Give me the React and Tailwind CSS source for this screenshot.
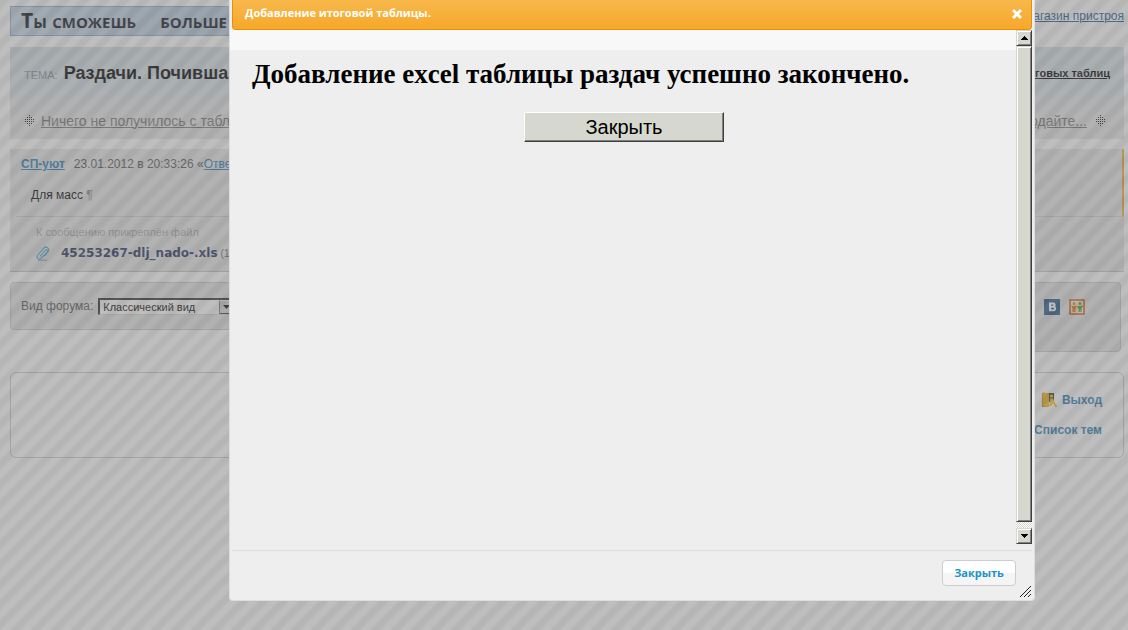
import React from 'react';

const stripes =
  'bg-[linear-gradient(135deg,#6b6b6b_20%,#7c7c7c_30%,#7c7c7c_45%,#6b6b6b_55%,#6b6b6b_70%,#7c7c7c_80%,#7c7c7c_95%,#6b6b6b)] bg-[length:20px_20px]';

function DotArrow({ flip }) {
  return (
    <svg width="11" height="11" viewBox="0 0 11 11" className={flip ? 'shrink-0 rotate-180' : 'shrink-0'} fill="#0b0b18">
      {[
        [5, 0], [3, 2], [5, 2], [7, 2], [1, 4], [3, 4], [5, 4], [7, 4], [9, 4],
        [1, 6], [3, 6], [5, 6], [7, 6], [9, 6], [3, 8], [5, 8], [7, 8], [5, 10],
      ].map(([x, y]) => (
        <rect key={`${x}-${y}`} x={x} y={y} width="1" height="1" />
      ))}
    </svg>
  );
}

function ClipIcon() {
  return (
    <svg width="14" height="15" viewBox="0 0 14 15" className="shrink-0" fill="none" stroke="#4fa3c4" strokeWidth="1.3" strokeLinecap="round">
      <path d="M4.2 10.2 9.4 4.2a1.2 1.2 0 0 1 1.9 1.5L5.4 12.2a2.4 2.4 0 0 1-3.7-3.1L7.8 2a2.8 2.8 0 0 1 4.4 3.4L8.8 9.6" />
      <path d="M2 14.2h9" stroke="#8aa4ae" strokeWidth="1" />
    </svg>
  );
}

function VkIcon() {
  return (
    <svg width="16" height="16" viewBox="0 0 16 16">
      <rect width="16" height="16" fill="#24578f" />
      <path d="M6 4.5h3a1.5 1.5 0 0 1 0 3.2H6zM6 7.7h3.4a1.7 1.7 0 0 1 0 3.6H6z" fill="none" stroke="#fff" strokeWidth="2" />
    </svg>
  );
}

function PeopleIcon() {
  return (
    <svg width="16" height="16" viewBox="0 0 16 16">
      <rect x="1" y="1" width="14" height="14" fill="#fbeecb" stroke="#d4581c" strokeWidth="1.6" />
      <g fill="#e0751a">
        <circle cx="5" cy="4.7" r="1.4" />
        <path d="M2.5 6.3 4 7h2.2l1.4-.7v1.8l-1 .7V13H5.3v-2.5h-.4V13H3.5V8.8l-1-.7z" />
      </g>
      <g fill="#4ca32a">
        <circle cx="11" cy="4.7" r="1.4" />
        <path d="M8.2 7.4 9.6 7H12l1.7-.8V8l-1.1.9V13h-1.3v-2.5h-.5V13H9.5V8.8l-1.3.2z" />
      </g>
    </svg>
  );
}

function ExitIcon() {
  return (
    <svg width="16" height="16" viewBox="0 0 16 16">
      <path d="M0 1h7v14H0z" fill="#c98a10" />
      <path d="M1 0 7 2v13l-6-1z" fill="#f2bb1c" />
      <path d="M7 1h5v9H7z" fill="#4e4220" />
      <circle cx="9.5" cy="4" r="1.5" fill="#f4d36a" />
      <path d="m8.500 6 2.500 1 1.500 3 3 5h-2l-3-4-1 3H7l1-4z" fill="#f2c52e" />
    </svg>
  );
}

function ScrollButton({ label, down }) {
  return (
    <button
      type="button"
      aria-label={label}
      className="flex h-4 w-4 items-center justify-center border border-t-[#d6d8cf] border-l-[#d6d8cf] border-r-[#404040] border-b-[#404040] bg-[#d6d8cf] shadow-[inset_1px_1px_#ffffff,inset_-1px_-1px_#808080]"
    >
      <svg width="7" height="4" viewBox="0 0 7 4" shapeRendering="crispEdges">
        <path d={down ? 'M0 0h7v1H6v1H5v1H4v1H3V3H2V2H1V1H0z' : 'M3 0h1v1h1v1h1v1h1v1H0V3h1V2h1V1h1z'} fill="#000" />
      </svg>
    </button>
  );
}

function ForumPage() {
  return (
    <div className="flex flex-col pt-[6px] pr-1 pl-[10px] font-['Liberation_Sans',Arial,sans-serif] whitespace-nowrap">
      <header className="flex h-[30px] justify-between">
        <div className="flex items-center gap-6 border border-[#8fabcc] bg-linear-to-r from-[#c9d9e8] to-[#b8cade] pr-1 pl-[10px] font-['Open_Sans',sans-serif] text-[21px] font-bold text-[#101525] [font-variant:small-caps]">
          <span>Ты сможешь</span>
          <span>больше</span>
        </div>
        <a href="#shop" className="pt-[2px] text-[12px] leading-4 text-[#1c5a8c] underline">Магазин пристроя</a>
      </header>

      <section className="mt-[11px] h-[92px] bg-linear-to-b from-[#d6e0e6] via-[#dae4ea] via-40% to-[#e8e8e8] to-70% px-[14px] pt-4">
        <div className="flex items-center justify-between">
          <h1 className="flex items-baseline gap-[6px]">
            <span className="text-[11px] text-[#8c9298]">ТЕМА:</span>
            <span className="text-[18px] leading-5 font-bold text-black">Раздачи. Почивша</span>
          </h1>
          <a href="#tables" className="text-[11px] leading-5 font-bold text-black underline">Список итоговых таблиц</a>
        </div>
        <div className="mt-[27px] flex items-center justify-between text-[14px] leading-5 text-[#777]">
          <div className="flex items-center gap-[6px]">
            <DotArrow flip />
            <a href="#prev" className="underline">Ничего не получилось с таблицей</a>
          </div>
          <div className="flex items-center gap-2 pr-1">
            <a href="#next" className="underline">Подайте...</a>
            <DotArrow />
          </div>
        </div>
      </section>

      <article className="mt-[10px] border-b border-[#c4c4c4] bg-[#e8e8e8]">
        <div className="h-[67px] border-r-2 border-[#eeb030] pt-[7px] pl-[11px] text-[12px] text-[#555]">
          <div className="flex gap-[9px] leading-[17px]">
            <a href="#author" className="font-bold text-[#2b7fb8] underline">СП-уют</a>
            <span>23.01.2012 в 20:33:26 «<a href="#reply" className="text-[#2b7fb8] underline">Ответить</a></span>
          </div>
          <p className="mt-[14px] ml-[10px] leading-[17px] text-black">Для масс <span className="text-[#888]">¶</span></p>
        </div>
        <div className="ml-[6px] h-[55px] border-t border-[#cfcfcf] pt-[7px] pl-5">
          <p className="text-[11px] leading-4 text-[#a8a8a8]">К сообщению прикреплён файл</p>
          <div className="mt-[5px] flex items-center gap-[11px] leading-[17px]">
            <ClipIcon />
            <a href="#file" className="font-['DejaVu_Sans',Verdana,sans-serif] text-[12px] font-bold text-[#24345f]">45253267-dlj_nado-.xls</a>
            <span className="-ml-2 text-[10px] text-[#666]">(18 Кб)</span>
          </div>
        </div>
      </article>

      <div className="mt-[10px] flex items-start">
        <div className="flex h-12 grow items-center rounded border border-[#cccccc] bg-[#e6e6e6] pl-[10px]">
          <label htmlFor="view" className="text-[12px] text-[#555]">Вид форума:</label>
          <div className="relative ml-[5px]">
            <select
              id="view"
              className="block h-[17px] w-[136px] appearance-none border border-t-2 border-l-2 border-[#d6d8cf] border-t-[#303030] border-l-[#303030] bg-white pl-[3px] text-[11px] leading-3 text-black"
            >
              <option>Классический вид</option>
            </select>
            <span className="pointer-events-none absolute top-[2px] right-[1px] flex h-[14px] w-[14px] items-center justify-center border border-t-white border-r-[#404040] border-b-[#404040] border-l-[#808080] bg-[#d6d8cf]">
              <svg width="7" height="4" viewBox="0 0 7 4"><path d="M0 0h7L3.5 4z" fill="#000" /></svg>
            </span>
          </div>
        </div>
        <div className="mr-[3px] flex h-[70px] w-[160px] items-start justify-end gap-[9px] rounded border border-[#cccccc] bg-[#e6e6e6] pt-4 pr-[35px]">
          <VkIcon />
          <PeopleIcon />
        </div>
      </div>

      <footer className="mt-5 flex h-[86px] flex-col items-end gap-[14px] rounded-md border border-[#cccccc] pt-[19px] pr-[21px] text-[12px] leading-4 font-bold text-[#2b7fb8]">
        <a href="#logout" className="flex items-center gap-1">
          <ExitIcon />
          Выход
        </a>
        <a href="#topics">Список тем</a>
      </footer>
    </div>
  );
}

function Dialog() {
  return (
    <div
      role="dialog"
      aria-labelledby="dialog-title"
      className="absolute top-0 right-[93px] left-[229px] rounded-b-[4px] border-x border-b border-[#dddddd] bg-[#eeeeee] px-[2px]"
    >
      <div className="flex h-[30px] items-center justify-between rounded-b-[4px] border border-t-0 border-[#e78f08] bg-linear-to-b from-[#f8b84a] to-[#f6a828] pr-[9px] pb-[2px] pl-3">
        <h2 id="dialog-title" className="font-['Open_Sans',sans-serif] text-[11px] font-bold text-white">
          Добавление итоговой таблицы.
        </h2>
        <button type="button" aria-label="Закрыть окно">
          <svg width="10" height="10" viewBox="0 0 10 10" stroke="#fff" strokeWidth="3">
            <path d="m1 1 8 8M9 1 1 9" />
          </svg>
        </button>
      </div>

      <div className="flex h-[514px]">
        <div className="-ml-[2px] grow bg-linear-to-b from-[#f8f8f8] from-[20px] to-[#eeeeee] to-[20px] pt-7 pl-[22px] font-['Liberation_Serif','Times_New_Roman',serif] text-black">
          <h1 className="text-[27px] leading-8 font-bold">Добавление excel таблицы раздач успешно закончено.</h1>
          <div className="mt-[22px] flex justify-center pr-5">
            <button
              type="button"
              className="h-[30px] w-[200px] border border-t-white border-r-[#404040] border-b-[#404040] border-l-white bg-[#d6d8cf] font-['Liberation_Sans',Arial,sans-serif] text-[20px] leading-6 shadow-[inset_-1px_-1px_#808080]"
            >
              Закрыть
            </button>
          </div>
        </div>
        <div className="flex w-4 shrink-0 flex-col bg-[repeating-conic-gradient(#ffffff_0_25%,#d6d8cf_0_50%)] bg-[length:2px_2px]">
          <ScrollButton label="Вверх" />
          <div className="mb-[6px] grow border border-t-[#d6d8cf] border-r-[#404040] border-b-[#404040] border-l-[#d6d8cf] bg-[#d6d8cf] shadow-[inset_1px_1px_#ffffff,inset_-1px_-1px_#808080]" />
          <ScrollButton label="Вниз" down />
        </div>
      </div>

      <div className="relative mt-[6px] flex h-[50px] items-start justify-end border-t border-[#dddddd] pt-[9px] pr-4">
        <button
          type="button"
          className="h-[26px] w-[74px] rounded-[4px] border border-[#cccccc] bg-linear-to-b from-white from-50% to-[#f5f5f5] to-50% font-['Open_Sans',sans-serif] text-[11px] font-bold text-[#1c94c4]"
        >
          Закрыть
        </button>
        <svg width="12" height="12" viewBox="0 0 12 12" stroke="#222" className="absolute right-0 bottom-[2px]">
          <path d="M0 11 11 0M4 11l7-7M8 11l3-3" />
        </svg>
      </div>
    </div>
  );
}

export default function App() {
  return (
    <div className="relative min-h-screen overflow-hidden bg-white">
      <ForumPage />
      <div className={`absolute inset-0 opacity-50 ${stripes}`} />
      <Dialog />
    </div>
  );
}
